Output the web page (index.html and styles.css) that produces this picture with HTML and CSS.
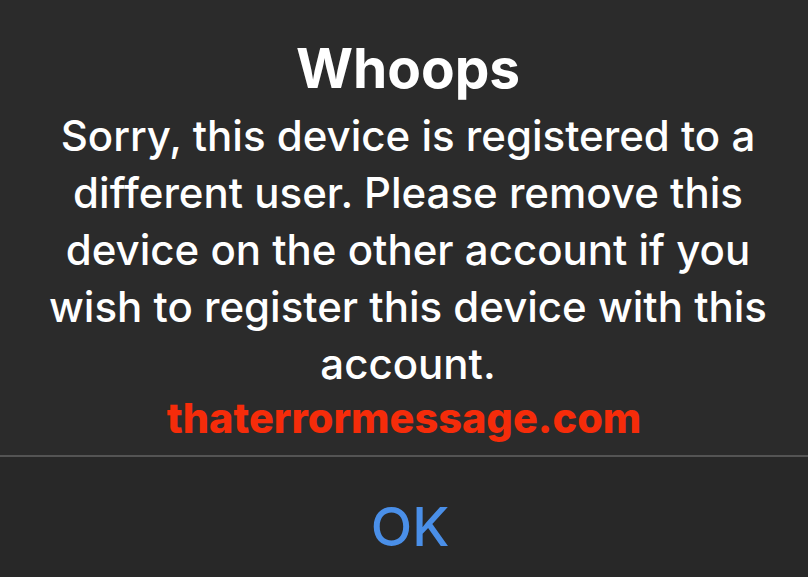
FILE: index.html
```html
<!DOCTYPE html>
<html lang="en">
<head>
    <meta charset="UTF-8">
    <meta name="viewport" content="width=device-width, initial-scale=1.0">
    <title>Whoops</title>
    <link rel="stylesheet" href="styles.css">
</head>
<body>
    <div class="alert">
        <div class="alert-body">
            <h1 class="alert-title">Whoops</h1>
            <p class="alert-message">Sorry, this device is registered to a different user. Please remove this device on the other account if you wish to register this device with this account.</p>
            <p class="watermark">thaterrormessage.com</p>
        </div>
        <button class="alert-button">OK</button>
    </div>
</body>
</html>
```

FILE: styles.css
```css
body {
    margin: 0;
    background-color: #2b2b2b;
    font-family: Inter, "Noto Sans", sans-serif;
    color: #fff;
}
.alert {
    height: 577px;
    display: flex;
    flex-direction: column;
}
.alert-body {
    height: 457px;
    box-sizing: border-box;
    padding: 36px 24px 0 32px;
    text-align: center;
    border-bottom: 2px solid #545454;
}
.alert-title {
    margin: 0 0 7px;
    font-size: 55px;
    font-weight: 700;
    line-height: 64px;
}
.alert-message {
    margin: 0;
    font-size: 42px;
    font-weight: 500;
    line-height: 57px;
}
.watermark {
    margin: 0;
    padding-right: 8px;
    font-size: 41.5px;
    font-weight: 800;
    line-height: 52px;
    color: #f52c0a;
}
.alert-button {
    flex: 1;
    border: none;
    background-color: #282828;
    color: #4a8fe8;
    font-family: Inter, "Noto Sans", sans-serif;
    font-size: 54px;
    font-weight: 500;
    padding: 18px 0 0 12px;
}
```
